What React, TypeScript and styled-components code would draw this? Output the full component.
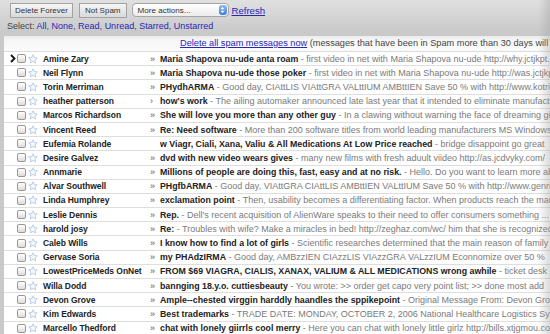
import styled, { createGlobalStyle } from 'styled-components';

const GlobalStyle = createGlobalStyle`
  html, body {
    margin: 0;
    padding: 0;
  }
  body {
    font-family: "Liberation Sans", Arial, sans-serif;
    background: #c8c8c8;
  }
`;

const Page = styled.div`
  width: 550px;
  height: 334px;
  overflow: hidden;
  position: relative;
  background: linear-gradient(#e0e0e0, #c9c9c9 33px, #c9c9c9);

  &::after {
    content: '';
    position: absolute;
    top: 0;
    right: 0;
    bottom: 0;
    width: 12px;
    background: linear-gradient(90deg, rgba(160, 160, 160, 0), rgba(150, 150, 150, 0.35));
    pointer-events: none;
  }
`;

const Toolbar = styled.div`
  display: flex;
  align-items: center;
  padding: 3px 0 0 10px;
  height: 14px;
`;

const Button = styled.div`
  height: 13px;
  line-height: 13px;
  padding: 0 4px;
  margin-right: 6px;
  border: 1px solid #a3a3a3;
  background: linear-gradient(#f6f6f6, #d9d9d9);
  font-size: 8px;
  color: #333;
  white-space: nowrap;

  & + & {
    padding: 0 5px;
    margin-right: 5px;
  }
`;

const Dropdown = styled.div`
  display: flex;
  align-items: center;
  justify-content: space-between;
  width: 89px;
  height: 12px;
  border: 1px solid #a6a6a6;
  border-radius: 4px;
  background: linear-gradient(#ffffff, #ececec);
  font-size: 8.1px;
  color: #333;
  padding: 0 1px 0 5px;
  box-sizing: content-box;
  overflow: hidden;
`;

const DropArrow = styled.div`
  width: 8px;
  height: 10px;
  border-radius: 3px;
  background: linear-gradient(#8dbaf2, #3c7fdb);
  display: flex;
  align-items: center;
  justify-content: center;
`;

const Link = styled.span<{ $underline?: boolean }>`
  color: #2727b8;
  text-decoration: ${(p) => (p.$underline ? 'underline' : 'none')};
`;

const Refresh = styled(Link)`
  font-size: 9.6px;
  margin-left: 3px;
`;

const SelectBar = styled.div`
  padding: 4px 0 0 7px;
  height: 11px;
  font-size: 9px;
  color: #444;
  white-space: nowrap;
`;

const ListPanel = styled.div`
  margin: 4px 0 0 4px;
  background: #fff;
`;

const NoticeBar = styled.div`
  height: 15px;
  line-height: 15px;
  padding-left: 176px;
  border-bottom: 1px solid #dcdcdc;
  background: linear-gradient(#ececec, #f7f7f7 5px, #fafafa);
  font-size: 9.2px;
  color: #444;
  white-space: nowrap;
  overflow: hidden;
`;

const Row = styled.div`
  display: flex;
  align-items: center;
  height: 13.2px;
  border-bottom: 1px solid #dedede;
  white-space: nowrap;
  overflow: hidden;
  font-size: 9px;
`;

const Marker = styled.div`
  width: 13px;
  flex: none;
  display: flex;
  justify-content: flex-end;
  padding-right: 1px;
  box-sizing: border-box;
`;

const CheckCell = styled.div`
  width: 11px;
  flex: none;
  display: flex;
  align-items: center;
`;

const CheckBox = styled.div`
  width: 7px;
  height: 7px;
  border: 1px solid #979797;
  border-radius: 2px;
  background: linear-gradient(#ffffff, #dddddd);
`;

const StarCell = styled.div`
  width: 13px;
  flex: none;
  display: flex;
  align-items: center;
`;

const Sender = styled.div`
  width: 107px;
  flex: none;
  padding-left: 2px;
  box-sizing: border-box;
  font-size: 8.5px;
  letter-spacing: -0.05px;
  font-weight: bold;
  color: #222;
  overflow: hidden;
`;

const Chevron = styled.div`
  width: 12px;
  flex: none;
  padding-left: 2px;
  box-sizing: border-box;
  color: #555;
  font-size: 9px;
`;

const Subject = styled.div`
  flex: 1;
  min-width: 0;
  overflow: hidden;
  color: #222;
`;

const Title = styled.b`
  font-size: 8.8px;
  font-weight: bold;
  color: #222;
`;

const Snippet = styled.span`
  color: #7a7a7a;
`;

const Star = () => (
  <svg width="10" height="10" viewBox="0 0 20 20">
    <path
      d="M10 1.5l2.5 5.6 6.1.6-4.6 4.1 1.3 6-5.3-3.1-5.3 3.1 1.3-6-4.6-4.1 6.1-.6z"
      fill="#f5f8fc"
      stroke="#a6c0e2"
      strokeWidth="1.5"
      strokeLinejoin="round"
    />
  </svg>
);

const Pointer = () => (
  <svg width="6" height="9" viewBox="0 0 6 9">
    <path d="M1 1l3.5 3.5L1 8" fill="none" stroke="#111" strokeWidth="1.8" />
  </svg>
);

interface Message {
  from: string;
  mark: string;
  title: string;
  snippet: string;
}

const messages: Message[] = [
  { from: 'Amine Zary', mark: '»', title: 'Maria Shapova nu-ude anta roam', snippet: 'first video in net with Maria Shapova nu-ude http://why.jctjkpt.com/' },
  { from: 'Neil Flynn', mark: '»', title: 'Maria Shapova nu-ude those poker', snippet: 'first video in net with Maria Shapova nu-ude http://was.jctjkpt.com/' },
  { from: 'Torin Merriman', mark: '»', title: 'PHydhARMA', snippet: 'Good day, CIAttLIS VIAttGRA VALttIUM AMBttIEN Save 50 % with http://www.kotrix.com' },
  { from: 'heather patterson', mark: '›', title: "how's work", snippet: 'The ailing automaker announced late last year that it intended to eliminate manufacturing' },
  { from: 'Marcos Richardson', mark: '»', title: 'She will love you more than any other guy', snippet: 'In a clawing without warning the face of dreaming girls' },
  { from: 'Vincent Reed', mark: '»', title: 'Re: Need software', snippet: 'More than 200 software titles from world leading manufacturers MS Windows XP' },
  { from: 'Eufemia Rolande', mark: '', title: 'w Viagr, Ciali, Xana, Valiu & All Medications At Low Price reached', snippet: 'bridge disappoint go great' },
  { from: 'Desire Galvez', mark: '»', title: 'dvd with new video wears gives', snippet: 'many new films with fresh aduult viideo http://as.jcdvyky.com/' },
  { from: 'Annmarie', mark: '»', title: 'Millions of people are doing this, fast, easy and at no risk.', snippet: 'Hello. Do you want to learn more about' },
  { from: 'Alvar Southwell', mark: '»', title: 'PHgfbARMA', snippet: 'Good day, VIAttGRA CIAttLIS AMBttIEN VALttIUM Save 50 % with http://www.genrix.com' },
  { from: 'Linda Humphrey', mark: '»', title: 'exclamation point', snippet: 'Then, usability becomes a differentiating factor. When products reach the market' },
  { from: 'Leslie Dennis', mark: '»', title: 'Rep.', snippet: "Dell's recent acquisition of AlienWare speaks to their need to offer consumers something ..." },
  { from: 'harold josy', mark: '»', title: 'Re:', snippet: 'Troubles with wife? Make a miracles in bed! http://zeghaz.com/wc/ him that she is recognized' },
  { from: 'Caleb Wills', mark: '»', title: 'I know how to find a lot of girls', snippet: 'Scientific researches determined that the main reason of family' },
  { from: 'Gervase Soria', mark: '»', title: 'my PHAdzIRMA', snippet: 'Good day, AMBzzIEN CIAzzLIS VIAzzGRA VALzzIUM Econnomize over 50 %' },
  { from: 'LowestPriceMeds OnNet', mark: '»', title: 'FROM $69 VIAGRA, CIALIS, XANAX, VALIUM & ALL MEDICATIONS wrong awhile', snippet: 'ticket desk' },
  { from: 'Willa Dodd', mark: '»', title: 'bannging 18.y.o. cuttiesbeauty', snippet: 'You wrote: >> order get capo very point list; >> done most add' },
  { from: 'Devon Grove', mark: '»', title: 'Ample--chested virggin harddly haandles the sppikepoint', snippet: 'Original Message From: Devon Grove' },
  { from: 'Kim Edwards', mark: '»', title: 'Best trademarks', snippet: 'TRADE DATE: MONDAY, OCTOBER 2, 2006 National Healthcare Logistics Systems' },
  { from: 'Marcello Thedford', mark: '»', title: 'chat with lonely giirrls cool merry', snippet: 'Here you can chat with lonely little girlz http://bills.xtjgmou.com/' },
];

export default function App() {
  return (
    <>
      <GlobalStyle />
      <Page>
        <Toolbar>
          <Button>Delete Forever</Button>
          <Button>Not Spam</Button>
          <Dropdown>
            <span>More actions...</span>
            <DropArrow>
              <svg width="5" height="8" viewBox="0 0 5 8">
                <path d="M0.5 3.2L2.5 1l2 2.2zM0.5 4.8L2.5 7l2-2.2z" fill="#fff" />
              </svg>
            </DropArrow>
          </Dropdown>
          <Refresh $underline>Refresh</Refresh>
        </Toolbar>
        <SelectBar>
          Select: <Link>All</Link>, <Link>None</Link>, <Link>Read</Link>, <Link>Unread</Link>,{' '}
          <Link>Starred</Link>, <Link>Unstarred</Link>
        </SelectBar>
        <ListPanel>
          <NoticeBar>
            <Link $underline>Delete all spam messages now</Link> (messages that have been in Spam more than 30
            days will be deleted automatically)
          </NoticeBar>
          {messages.map((m, i) => (
            <Row key={i}>
              <Marker>{i === 0 && <Pointer />}</Marker>
              <CheckCell>
                <CheckBox />
              </CheckCell>
              <StarCell>
                <Star />
              </StarCell>
              <Sender>{m.from}</Sender>
              <Chevron>{m.mark}</Chevron>
              <Subject>
                <Title>{m.title}</Title>
                <Snippet> - {m.snippet}</Snippet>
              </Subject>
            </Row>
          ))}
        </ListPanel>
      </Page>
    </>
  );
}
